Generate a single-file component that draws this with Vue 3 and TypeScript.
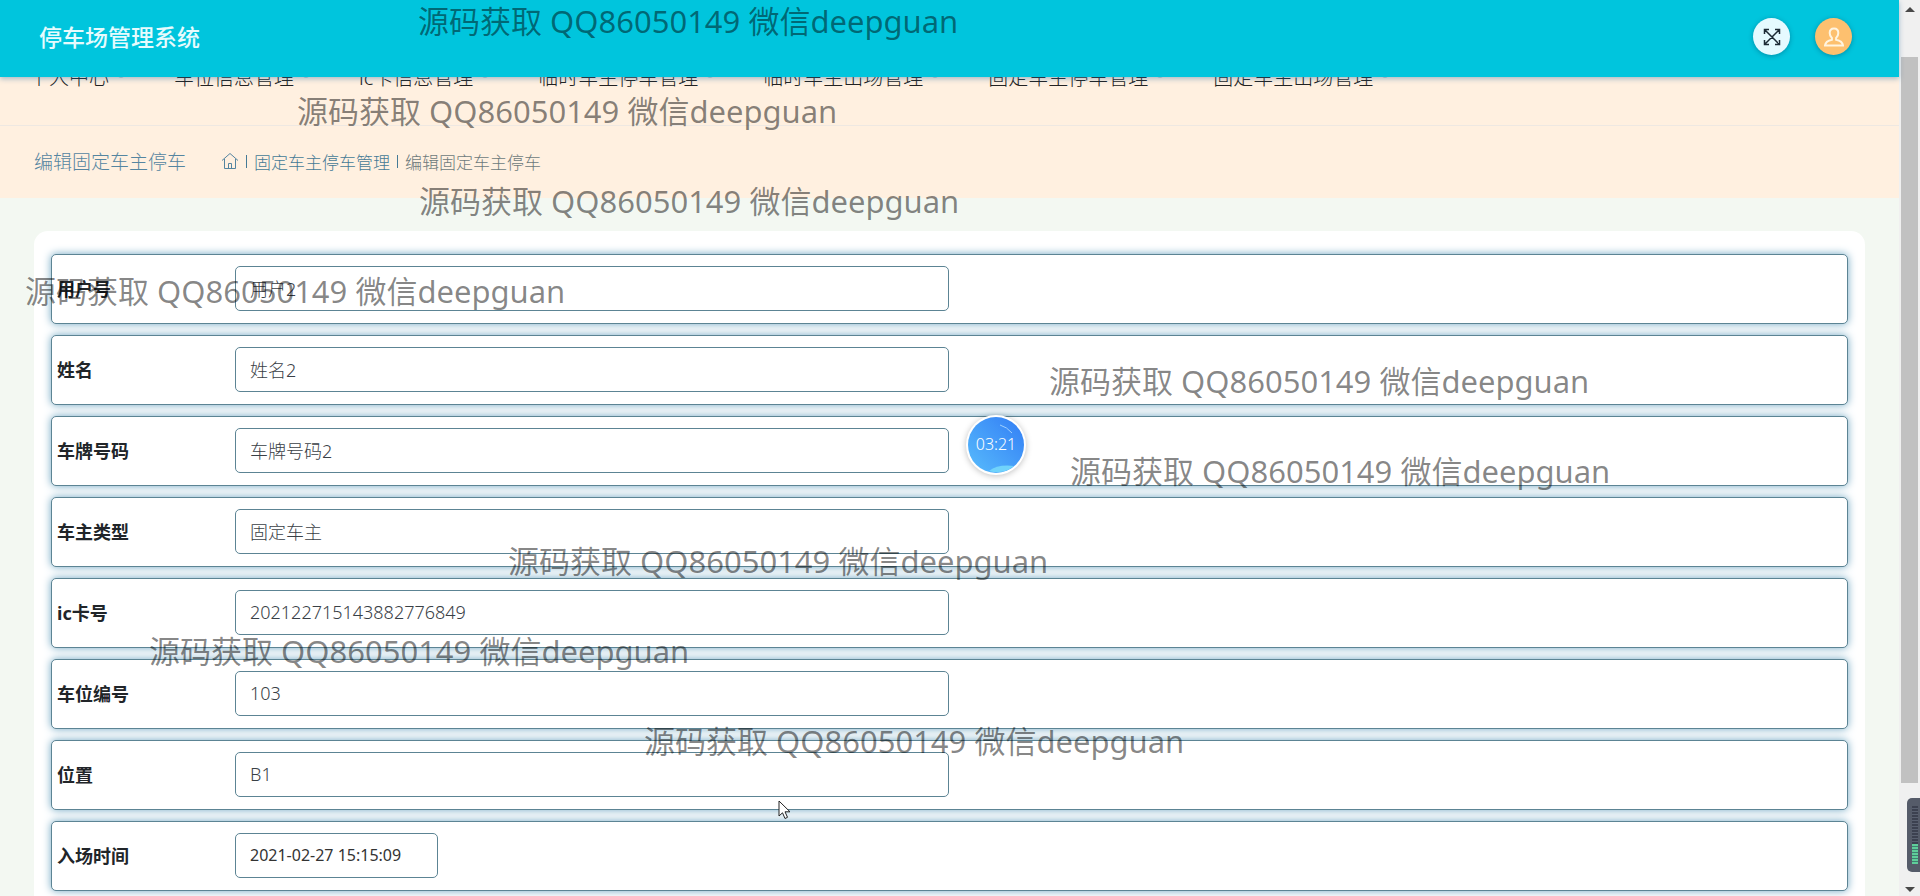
<script setup lang="ts">
import { ref } from 'vue'

interface Field {
  id: string
  label: string
  value: string
  short?: boolean
}

const menus: string[] = [
  '个人中心',
  '车位信息管理',
  'ic卡信息管理',
  '临时车主停车管理',
  '临时车主出场管理',
  '固定车主停车管理',
  '固定车主出场管理',
]

const fields = ref<Field[]>([
  { id: 'account', label: '用户号', value: '用户2' },
  { id: 'name', label: '姓名', value: '姓名2' },
  { id: 'plate', label: '车牌号码', value: '车牌号码2' },
  { id: 'owner', label: '车主类型', value: '固定车主' },
  { id: 'card', label: 'ic卡号', value: '202122715143882776849' },
  { id: 'space', label: '车位编号', value: '103' },
  { id: 'location', label: '位置', value: 'B1' },
  { id: 'entry', label: '入场时间', value: '2021-02-27 15:15:09', short: true },
])

const notice = '源码获取 QQ86050149 微信deepguan'
const notices = [
  { x: 418, y: 0 },
  { x: 297, y: 90 },
  { x: 419, y: 180 },
  { x: 25, y: 270 },
  { x: 1049, y: 360 },
  { x: 1070, y: 450 },
  { x: 508, y: 540 },
  { x: 149, y: 630 },
  { x: 644, y: 720 },
]
</script>

<template>
  <div class="app">
    <div class="page">
      <header class="header">
        <h1 class="brand">停车场管理系统</h1>
        <div class="actions">
          <button class="round light" type="button" aria-label="全屏">
            <svg viewBox="0 0 18 18" width="18" height="18">
              <path d="M1.500 1.500l15 15M16.500 1.500l-15 15M1.500 6V1.500H6M12 1.500h4.500V6M16.500 12v4.500H12M6 16.500H1.500V12" />
            </svg>
          </button>
          <button class="round user" type="button" aria-label="用户">
            <svg viewBox="0 0 20 20" width="20" height="20">
              <path d="M10 1.500c-3 0-4.300 2-4.300 4.500 0 2 .8 3.800 2.200 5v1.800C4 13.600 1.500 15 1 18.500h18c-.5-3.500-3-4.900-6.900-5.700v-1.800c1.400-1.200 2.200-3 2.200-5 0-2.500-1.300-4.500-4.300-4.500z" />
            </svg>
          </button>
        </div>
      </header>

      <nav class="nav">
        <a v-for="item in menus" :key="item" href="#" class="nav-item">{{ item }}<i class="caret"></i></a>
      </nav>

      <section class="crumbs">
        <h2 class="crumb-title">编辑固定车主停车</h2>
        <a class="home" href="#" aria-label="首页">
          <svg viewBox="0 0 18 18" width="18" height="18">
            <path d="M1 8.500L9 1.500l8 7M3.500 7v9.500h11V7M7.500 16.500v-5h3v5" />
          </svg>
        </a>
        <span class="bar"></span>
        <a class="crumb" href="#">固定车主停车管理</a>
        <span class="bar"></span>
        <span class="crumb current">编辑固定车主停车</span>
      </section>

      <main class="content">
        <form class="card" @submit.prevent>
          <div v-for="f in fields" :key="f.id" class="row">
            <label class="label" :for="f.id">{{ f.label }}</label>
            <input :id="f.id" v-model="f.value" class="input" :class="{ short: f.short }" type="text" />
          </div>
        </form>
      </main>
    </div>

    <div class="scroll" aria-hidden="true">
      <span class="arrow up"></span>
      <span class="thumb"></span>
      <span class="arrow down"></span>
    </div>

    <div v-for="n in notices" :key="n.y" class="notice" :style="{ left: n.x + 'px', top: n.y + 'px' }">{{ notice }}</div>

    <div class="timer">
      <svg class="timer-art" viewBox="0 0 56 56" width="56" height="56">
        <defs>
          <linearGradient id="orb" x1="0" y1="1" x2="1" y2="0">
            <stop offset="0" stop-color="#58bcfc" />
            <stop offset="1" stop-color="#327df5" />
          </linearGradient>
        </defs>
        <circle cx="28" cy="28" r="28" fill="url(#orb)" />
        <path d="M21 54q9-7 25-5-11 9-25 5z" fill="#70d3fb" />
        <path d="M32 8q7 2 12 8" fill="none" stroke="#9fd0ff" stroke-width="1" />
      </svg>
      <span class="timer-text">03:21</span>
    </div>

    <div class="meter"><span class="meter-off"></span><span class="meter-on"></span></div>

    <svg class="pointer" viewBox="0 0 13 20" width="13" height="20">
      <path d="M1 1v15l3.500-3.200L7 18.500l2.500-1.200L7 11.800h5z" fill="#fff" stroke="#222" stroke-width="1" />
    </svg>
  </div>
</template>

<style>
body {
  margin: 0;
}
</style>

<style scoped>
* {
  box-sizing: border-box;
}

.app {
  position: relative;
  display: flex;
  height: 100vh;
  overflow: hidden;
  background: #f3f8f2;
  font-family: 'Noto Sans', 'Noto Sans CJK SC', sans-serif;
  color: #212529;
}

.page {
  flex: 1;
  min-width: 0;
  display: flex;
  flex-direction: column;
}

.header {
  position: relative;
  z-index: 1;
  flex: none;
  display: flex;
  align-items: center;
  justify-content: space-between;
  height: 77px;
  padding: 0 47px 4px 39px;
  background: #00c5dd;
  box-shadow: 0 2px 5px rgba(40, 110, 160, 0.4);
}

.brand {
  margin: 0;
  font-size: 23px;
  font-weight: 500;
  line-height: 32px;
  color: #e6fbfd;
}

.actions {
  display: flex;
  gap: 25px;
}

.round {
  display: flex;
  align-items: center;
  justify-content: center;
  width: 37px;
  height: 37px;
  padding: 0;
  border: 0;
  border-radius: 50%;
  box-shadow: 0 1px 5px rgba(0, 60, 90, 0.4);
}

.round svg {
  fill: none;
  stroke-width: 1.5;
}

.light {
  background: #e5faff;
}

.light svg {
  stroke: #1d2b36;
}

.user {
  background: #fdc06f;
}

.user svg {
  stroke: #fff4e0;
  stroke-width: 2;
}

.nav {
  flex: none;
  display: flex;
  height: 67px;
  margin-top: -18px;
  padding: 2px 29px 0;
  background: #fff0e0;
  border-bottom: 1px solid #eee8e2;
  box-shadow: 0 1px 3px rgba(80, 80, 120, 0.08);
}

.nav-item {
  display: flex;
  align-items: center;
  height: 30px;
  margin-right: 50px;
  font-size: 20px;
  font-weight: 300;
  color: #222;
  white-space: nowrap;
  text-decoration: none;
}

.caret {
  width: 6px;
  height: 3px;
  margin-left: 9px;
  border-radius: 0 0 3px 3px;
  background: #c9c9c6;
}

.crumbs {
  flex: none;
  display: flex;
  align-items: center;
  height: 72px;
  padding: 0 34px 2px;
  background: #fff0e0;
  color: #5585a0;
}

.crumb-title {
  margin: 0 35px 0 0;
  font-size: 19px;
  font-weight: 300;
}

.home {
  display: flex;
}

.home svg {
  fill: none;
  stroke: #5585a0;
  stroke-width: 1;
}

.bar {
  width: 1px;
  height: 13px;
  margin: 0 7px;
  background: #457a96;
}

.crumb {
  font-size: 17px;
  font-weight: 300;
  color: #457a96;
  text-decoration: none;
}

.current {
  color: #6d7a7c;
}

.content {
  padding: 33px 34px 0;
}

.card {
  display: flex;
  flex-direction: column;
  gap: 11px;
  padding: 23px 17px 40px;
  border-radius: 14px;
  background: #fff;
}

.row {
  display: flex;
  align-items: center;
  height: 70px;
  padding: 0 6px 1px 5px;
  border: 1px solid #5c8494;
  border-radius: 5px;
  background: #fff;
  box-shadow: 0 0 8px #6fa6c2;
}

.label {
  flex: none;
  width: 178px;
  padding-bottom: 2px;
  font-size: 18px;
  font-weight: 700;
}

.input {
  width: 40%;
  height: 45px;
  padding: 0 14px 2px;
  border: 1px solid #5c8494;
  border-radius: 5px;
  outline: 0;
  background: #fff;
  font-family: inherit;
  font-size: 18px;
  font-weight: 300;
  color: #394046;
}

.short {
  width: 203px;
  font-size: 16px;
  font-weight: 400;
  color: #333;
}

.scroll {
  flex: none;
  display: flex;
  flex-direction: column;
  align-items: center;
  width: 21px;
  padding: 7px 0 4px;
  background: #f0f0f0;
}

.arrow {
  border: 5px solid transparent;
}

.up {
  border-top: 0;
  border-bottom-color: #484848;
}

.down {
  margin-top: auto;
  border-bottom: 0;
  border-top-color: #484848;
}

.thumb {
  width: 17px;
  height: 82%;
  margin-top: 45px;
  background: #c1c1c1;
}

.notice {
  position: absolute;
  z-index: 2;
  font-size: 31px;
  line-height: 42px;
  color: rgba(0, 0, 0, 0.48);
  white-space: nowrap;
  pointer-events: none;
}

.timer {
  position: absolute;
  z-index: 3;
  left: 966px;
  top: 415px;
  width: 60px;
  height: 60px;
  border: 2px solid #fff;
  border-radius: 50%;
  background: #fff;
  box-shadow: 0 1px 6px rgba(0, 0, 0, 0.25);
}

.timer-art {
  display: block;
}

.timer-text {
  position: absolute;
  inset: 0;
  font-size: 16px;
  font-weight: 300;
  line-height: 54px;
  text-align: center;
  color: #fff;
}

.meter {
  position: absolute;
  z-index: 3;
  right: 0;
  top: 798px;
  display: flex;
  flex-direction: column;
  width: 13px;
  height: 74px;
  padding: 8px 2px 8px 5px;
  border-radius: 5px 0 0 5px;
  background: #555b69;
}

.meter-off {
  flex: 1;
  background: repeating-linear-gradient(#3c4150 0 2px, #596070 2px 3px);
}

.meter-on {
  height: 20px;
  background: repeating-linear-gradient(#5fce9a 0 2px, #3f7f70 2px 3px);
}

.pointer {
  position: absolute;
  z-index: 3;
  left: 778px;
  top: 800px;
}
</style>
